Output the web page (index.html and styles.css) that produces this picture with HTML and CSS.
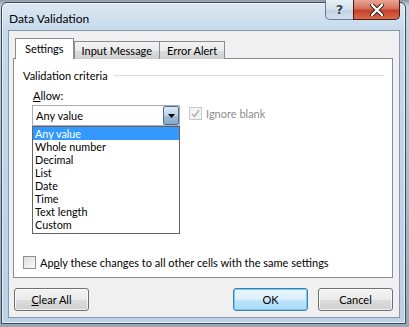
FILE: index.html
```html
<!DOCTYPE html>
<html lang="en">
<head>
  <meta charset="UTF-8" />
  <title>Data Validation</title>
  <link rel="stylesheet" href="styles.css">
</head>
<body>
  <div class="window">
    <!-- Title bar -->
    <div class="titlebar">
      <span class="title">Data Validation</span>
      <div class="caption-buttons">
        <div class="cap-help">?</div>
        <div class="cap-close">
          <svg width="14" height="12" viewBox="0 0 14 12">
            <path d="M2 1 L12 11 M12 1 L2 11" stroke="#3a1510" stroke-width="4.2" stroke-linecap="round"/>
            <path d="M2 1 L12 11 M12 1 L2 11" stroke="#fff" stroke-width="2.4" stroke-linecap="round"/>
          </svg>
        </div>
      </div>
    </div>

    <div class="client">
      <div class="tabs">
        <div class="tab active">Settings</div>
        <div class="tab">Input Message</div>
        <div class="tab">Error Alert</div>
      </div>

      <div class="panel">
        <div class="group-title"><span>Validation criteria</span><div class="rule"></div></div>

        <div class="allow-label"><u>A</u>llow:</div>
        <div class="allow-row">
          <div class="combo-wrap">
            <div class="combo">
              <span class="combo-text">Any value</span>
              <div class="combo-btn">
                <svg width="7" height="4" viewBox="0 0 7 4"><path d="M0 0 H7 L3.5 4 Z" fill="#000"/></svg>
              </div>
            </div>
            <ul class="droplist">
              <li class="selected">Any value</li>
              <li>Whole number</li>
              <li>Decimal</li>
              <li>List</li>
              <li>Date</li>
              <li>Time</li>
              <li>Text length</li>
              <li>Custom</li>
            </ul>
          </div>
          <label class="check disabled">
            <span class="box">
              <svg width="9" height="9" viewBox="0 0 9 9"><path d="M1 5 L3.5 7.5 L8 1" fill="none" stroke="#b4b4b4" stroke-width="1.6"/></svg>
            </span>
            <span>Ignore blank</span>
          </label>
        </div>

        <div class="spacer"></div>

        <label class="check apply">
          <span class="box"></span>
          <span>Ap<u>p</u>ly these changes to all other cells with the same settings</span>
        </label>
      </div>

      <div class="buttons">
        <button class="btn"><u>C</u>lear All</button>
        <div class="right-buttons">
          <button class="btn default">OK</button>
          <button class="btn">Cancel</button>
        </div>
      </div>
    </div>
  </div>
</body>
</html>
```

FILE: styles.css
```css
body {
  margin: 0;
  background: linear-gradient(180deg, #8a97a6 0px, #c8d3de 6px, #9aa6b3 100%);
  font-family: Lato, "Liberation Sans", sans-serif;
  font-size: 11px;
  color: #000;
  width: 409px;
  height: 327px;
  overflow: hidden;
}
.window {
  margin: 2px 0 0 1px;
  width: 405px;
  height: 322px;
  box-sizing: border-box;
  border: 1px solid #3c4a5a;
  border-radius: 6px 6px 0 0;
  background: linear-gradient(180deg, #dce8f3 0px, #c5d9ec 28px, #bcd1e6 100%);
  box-shadow: inset 0 0 0 1px rgba(255,255,255,0.6);
  display: flex;
  flex-direction: column;
  padding: 0 5px 5px 6px;
}
.titlebar {
  height: 27px;
  display: flex;
  align-items: flex-start;
  justify-content: space-between;
  flex-shrink: 0;
}
.title {
  font-size: 12px;
  margin-top: 8px;
  margin-left: 1px;
  color: #000;
}
.caption-buttons {
  display: flex;
  margin-top: -3px;
}
.cap-help {
  width: 28px;
  height: 20px;
  box-sizing: border-box;
  border: 1px solid #6a7d92;
  border-right: none;
  border-top: none;
  border-radius: 0 0 0 5px;
  background: linear-gradient(180deg, #e9f0f7 0%, #d3dfeb 50%, #c0d0e0 51%, #d2e0ee 100%);
  color: #33455a;
  font-family: "DejaVu Sans", sans-serif;
  font-size: 13px;
  font-weight: bold;
  text-align: center;
  line-height: 19px;
  text-shadow: 0 0 2px #fff;
}
.cap-close {
  width: 47px;
  height: 20px;
  box-sizing: border-box;
  border: 1px solid #4b1a12;
  border-top: none;
  border-radius: 0 0 5px 0;
  background: linear-gradient(180deg, #e8a596 0%, #d6705c 45%, #c4422a 55%, #d86a4e 100%);
  display: flex;
  align-items: center;
  justify-content: center;
}
.client {
  flex: 1;
  background: #f0f0f0;
  border: 1px solid #8699ad;
  display: flex;
  flex-direction: column;
  padding: 7px 6px 0 4px;
}
.tabs {
  display: flex;
  align-items: flex-end;
  padding-left: 2px;
  height: 21px;
  position: relative;
  z-index: 1;
  margin-bottom: -1px;
}
.tab {
  height: 18px;
  line-height: 17px;
  padding: 0 7px;
  box-sizing: border-box;
  border: 1px solid #898c95;
  border-bottom: none;
  margin-right: -1px;
  background: linear-gradient(180deg, #f2f2f2 0%, #ebebeb 50%, #dddddd 51%, #cfcfcf 100%);
  color: #000;
}
.tab.active {
  height: 21px;
  line-height: 20px;
  background: #fff;
  padding: 0 9px;
  margin-right: 0;
}
.panel {
  height: 220px;
  box-sizing: border-box;
  background: #fff;
  border: 1px solid #898c95;
  display: flex;
  flex-direction: column;
  padding: 9px 8px 0 9px;
}
.group-title {
  display: flex;
  align-items: center;
  gap: 6px;
  height: 14px;
}
.rule {
  flex: 1;
  height: 1px;
  background: #d5dfe5;
}
.allow-label {
  margin: 7px 0 0 10px;
  height: 14px;
  line-height: 14px;
}
.allow-row {
  display: flex;
  align-items: flex-start;
  margin: 2px 0 0 9px;
}
.combo-wrap {
  position: relative;
  width: 148px;
}
.combo {
  height: 21px;
  box-sizing: border-box;
  border: 1px solid #abadb3;
  display: flex;
  align-items: center;
  justify-content: space-between;
  padding-left: 3px;
}
.combo-btn {
  width: 16px;
  height: 19px;
  box-sizing: border-box;
  border: 1px solid #4f6f90;
  border-radius: 2px;
  background: linear-gradient(180deg, #dbe8f3 0%, #bcd3e6 50%, #9fbdd7 51%, #86a9c8 100%);
  display: flex;
  align-items: center;
  justify-content: center;
}
.droplist {
  position: absolute;
  top: 21px;
  left: 0;
  width: 148px;
  box-sizing: border-box;
  margin: 0;
  padding: 0 0 2px 0;
  list-style: none;
  background: #fff;
  border: 1px solid #646464;
}
.droplist li {
  height: 13px;
  line-height: 13px;
  font-size: 10.8px;
  padding-left: 2px;
}
.droplist li.selected {
  background: #3399ff;
  color: #fff;
}
.check {
  display: flex;
  align-items: center;
  gap: 4px;
}
.check .box {
  width: 13px;
  height: 13px;
  box-sizing: border-box;
  border: 1px solid #8e8f8f;
  background: linear-gradient(135deg, #dcdcdc 0%, #fafafa 100%);
  display: flex;
  align-items: center;
  justify-content: center;
}
.check.disabled {
  color: #8d8d8d;
  margin: 2px 0 0 9px;
}
.check.disabled .box {
  border-color: #c8c8c8;
  background: #f4f4f4;
}
.spacer {
  flex: 1;
}
.apply {
  margin-bottom: 8px;
}
.buttons {
  display: flex;
  justify-content: space-between;
  margin-top: 10px;
  padding-left: 1px;
}
.right-buttons {
  display: flex;
  gap: 10px;
}
.btn {
  width: 75px;
  height: 23px;
  margin: 0;
  font-family: inherit;
  font-size: 11px;
  color: #000;
  border: 1px solid #707070;
  border-radius: 3px;
  background: linear-gradient(180deg, #f2f2f2 0%, #ebebeb 50%, #dddddd 51%, #cfcfcf 100%);
  box-shadow: inset 0 0 0 1px rgba(255,255,255,0.7);
  padding: 0;
}
.btn.default {
  border-color: #3c7fb1;
  background: linear-gradient(180deg, #eaf6fd 0%, #d9f0fc 50%, #bee6fd 51%, #a7d9f5 100%);
  box-shadow: inset 0 0 0 1px #7ccaf2;
}
```
